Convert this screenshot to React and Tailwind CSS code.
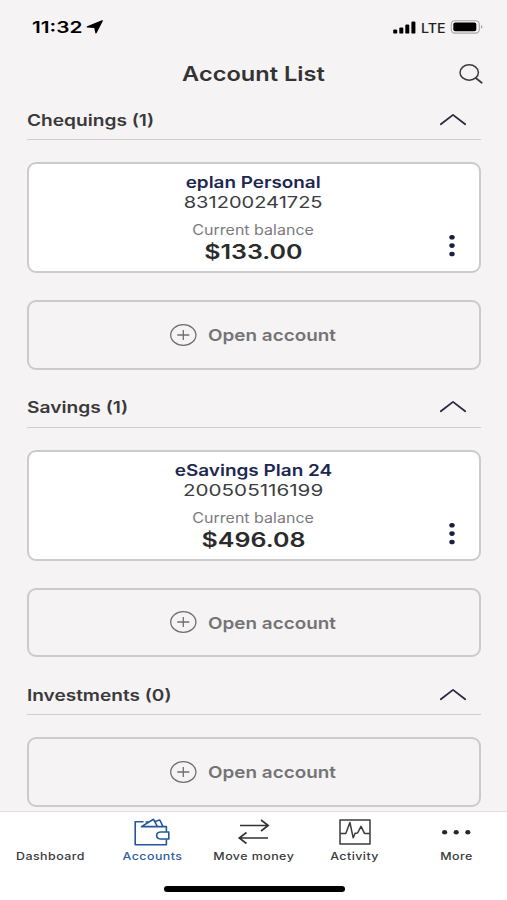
import clsx from "clsx";

const sections = [
  {
    title: "Chequings (1)",
    titleScale: "scale-x-[1.195]",
    accounts: [
      {
        name: "eplan Personal",
        nameScale: "scale-x-[1.18]",
        number: "831200241725",
        numberScale: "scale-x-[1.215]",
        balance: "$133.00",
      },
    ],
  },
  {
    title: "Savings (1)",
    titleScale: "scale-x-[1.2]",
    accounts: [
      {
        name: "eSavings Plan 24",
        nameScale: "scale-x-[1.185]",
        number: "200505116199",
        numberScale: "scale-x-[1.25]",
        balance: "$496.08",
      },
    ],
  },
  { title: "Investments (0)", titleScale: "scale-x-[1.19]", accounts: [] },
];

// Wide lettering: Inter stretched along the x axis
const Wide = ({ className, children }) => (
  <span className={clsx("inline-block whitespace-nowrap", className)}>
    {children}
  </span>
);

const StatusBar = () => (
  <div className="flex h-[54px] shrink-0 items-center justify-between pl-8 pr-[23px] text-black">
    <div className="flex items-center">
      <div className="w-[54px]">
        <Wide className="origin-left scale-x-[1.3] text-[16px] font-semibold">
          11:32
        </Wide>
      </div>
      <svg className="h-[14px] w-[18px]" viewBox="0 0 18 14">
        <path d="M16.2 0.8 L10 12.8 L8.8 7.4 L1.4 6.9 Z" fill="#000" stroke="#000" strokeWidth="1.4" strokeLinejoin="round" />
      </svg>
    </div>
    <div className="flex items-center">
      <svg className="h-[13px] w-6" viewBox="0 0 24 13">
        <rect x="0.2" y="8.4" width="4" height="4.2" rx="1.2" />
        <rect x="6.3" y="6.4" width="4" height="6.2" rx="1.2" />
        <rect x="12.3" y="3.6" width="4" height="9" rx="1.2" />
        <rect x="18.4" y="0.5" width="4" height="12.1" rx="1.2" />
      </svg>
      <div className="ml-1 w-[29px]">
        <Wide className="origin-left scale-x-[1.06] text-[13.5px] font-medium text-[#222]">
          LTE
        </Wide>
      </div>
      <svg className="h-[14px] w-[34px]" viewBox="0 0 34 14">
        <rect x="1.3" y="0.7" width="28" height="12.4" rx="3.6" fill="none" stroke="#a9a8a9" strokeWidth="1.1" />
        <rect x="3.3" y="2.5" width="23" height="8.8" rx="2" />
        <path d="M31.2 5 Q33.6 6.9 31.2 8.8 Z" fill="#8f8e8f" />
      </svg>
    </div>
  </div>
);

const Header = () => (
  <header className="relative flex h-[39px] shrink-0 items-center justify-center">
    <h1 className="text-[20px] font-semibold leading-none text-[#333]">
      <Wide className="scale-x-[1.18]">Account List</Wide>
    </h1>
    <button className="absolute right-[23px] top-[9px]" aria-label="Search">
      <svg className="h-[22px] w-[26px]" viewBox="0 0 26 22" fill="none" stroke="#3c3c3e" strokeWidth="1.5">
        <ellipse cx="11.2" cy="9.5" rx="9.2" ry="7.7" />
        <path d="M17.8 15 L23.7 19.7" strokeLinecap="round" strokeWidth="1.8" />
      </svg>
    </button>
  </header>
);

const AccountCard = ({ account }) => (
  <div className="mb-[27px] flex h-[111px] rounded-[9px] border-2 border-[#cccbcc] bg-white">
    <div className="w-12" />
    <div className="flex flex-1 flex-col items-center pt-2">
      <div className="h-5 text-[16px] font-semibold leading-5 text-[#1d2850]">
        <Wide className={account.nameScale}>{account.name}</Wide>
      </div>
      <div className="h-[23px] text-[16.5px] leading-[21px] text-[#3d3d3f]">
        <Wide className={account.numberScale}>{account.number}</Wide>
      </div>
      <div className="mt-[5px] h-5 text-[14px] leading-5 text-[#7b7b7d]">
        <Wide className="scale-x-[1.145]">Current balance</Wide>
      </div>
      <div className="h-6 text-[20px] font-semibold leading-6 text-[#2b2b2d]">
        <Wide className="scale-x-[1.25]">{account.balance}</Wide>
      </div>
    </div>
    <button className="mt-[70px] flex h-[23px] w-12 pl-[18px]" aria-label="Options">
      <svg className="h-[23px] w-[7px]" viewBox="0 0 7 23" fill="#17203f">
        <ellipse cx="3" cy="3.2" rx="2.7" ry="2.3" />
        <ellipse cx="3" cy="11.6" rx="2.7" ry="2.3" />
        <ellipse cx="3" cy="20" rx="2.7" ry="2.3" />
      </svg>
    </button>
  </div>
);

const OpenAccount = () => (
  <button className="flex h-[69.5px] w-full items-center rounded-[9px] border-2 border-[#cccbcc] pl-[140px]">
    <svg className="h-6 w-7" viewBox="0 0 28 24" fill="none" stroke="#6f6f71" strokeWidth="1.3">
      <ellipse cx="14.3" cy="12" rx="12.6" ry="10.4" />
      <path d="M8.3 12 H20.3 M14.3 6.9 V17.1" />
    </svg>
    <Wide className="ml-[11px] mt-px origin-left scale-x-[1.145] text-[16.5px] font-semibold text-[#747476]">
      Open account
    </Wide>
  </button>
);

const Section = ({ section }) => (
  <section className="mb-[18.2px]">
    <div className="mb-[22px] flex h-10 items-center justify-between border-b-[1.5px] border-[#d0cfd0] pr-[14px]">
      <h2 className="text-[16px] font-semibold text-[#3a393b]">
        <Wide className={clsx("origin-left", section.titleScale)}>
          {section.title}
        </Wide>
      </h2>
      <svg className="h-[14px] w-7" viewBox="0 0 28 14" fill="none" stroke="#252a3d" strokeWidth="1.8">
        <path d="M1.8 11.2 L14 1.9 L26.2 11.2" strokeLinecap="round" strokeLinejoin="round" />
      </svg>
    </div>
    {section.accounts.map((account) => (
      <AccountCard key={account.number} account={account} />
    ))}
    <OpenAccount />
  </section>
);

const WalletIcon = () => (
  <svg className="h-[30px] w-9" viewBox="0 0 36 30" fill="none" stroke="#25569b" strokeWidth="1.6" strokeLinejoin="round">
    <path d="M9.5 4.8 H1.2 V27.8 H32.4 V22.2 M32.4 14.8 V9.6 H7.5 L19.5 2.3 L23.2 9.2" />
    <path d="M20.7 4.6 L25.8 3 L28.9 9.3 M11.5 5 H14.5" />
    <path d="M26.4 15 H34.8 V22 H26.4 Q22.6 21.6 22.6 18.5 Q22.6 15.4 26.4 15 Z" />
  </svg>
);

const MoveIcon = () => (
  <svg className="h-[30px] w-9" viewBox="0 0 36 30" fill="none" stroke="#333335" strokeWidth="1.6">
    <path d="M5 8.5 H33 M26 3 L33.3 8.5 L26 14" />
    <path d="M33 21 H4.5 M11.5 15.5 L4.2 21 L11.5 26.5" />
  </svg>
);

const ActivityIcon = () => (
  <svg className="h-[30px] w-9" viewBox="0 0 36 30" fill="none" stroke="#3b3b3d" strokeWidth="1.5" strokeLinejoin="round">
    <rect x="3" y="3" width="30" height="24" />
    <path d="M3 16.4 H8.8 L12.9 5.5 L16.2 20.8 L18.1 16.3 L20.6 16 L24 9.3 L27.5 16.4 H33" />
  </svg>
);

const MoreIcon = () => (
  <svg className="h-[30px] w-9" viewBox="0 0 36 30" fill="#28282a">
    <ellipse cx="6.6" cy="15.2" rx="2.6" ry="2.2" />
    <ellipse cx="18.2" cy="15.2" rx="2.6" ry="2.2" />
    <ellipse cx="29.8" cy="15.2" rx="2.6" ry="2.2" />
  </svg>
);

const tabs = [
  { label: "Dashboard" },
  { label: "Accounts", icon: WalletIcon, active: true },
  { label: "Move money", icon: MoveIcon },
  { label: "Activity", icon: ActivityIcon },
  { label: "More", icon: MoreIcon },
];

const TabBar = () => (
  <nav className="flex h-[89px] shrink-0 flex-col items-center border-t border-[#dedddf] bg-white">
    <div className="grid w-full grid-cols-5 pt-[5px]">
      {tabs.map(({ label, icon: Icon, active }) => (
        <div key={label} className="flex flex-col items-center">
          <div className="h-[30px]">{Icon && <Icon />}</div>
          <div
            className={clsx(
              "h-[18px] text-[11px] font-medium leading-[19px] tracking-[0.4px]",
              active ? "text-[#2f5e9e]" : "text-[#39393b]"
            )}
          >
            <Wide className="scale-x-[1.13]">{label}</Wide>
          </div>
        </div>
      ))}
    </div>
    <div className="ml-px mt-[21px] h-[6px] w-[181px] rounded-full bg-black" />
  </nav>
);

export default function App() {
  return (
    <div className="flex h-[900px] w-[507px] flex-col overflow-hidden bg-[#f5f3f4] font-['Inter',sans-serif]">
      <StatusBar />
      <Header />
      <main className="min-h-0 flex-1 overflow-hidden px-[26.5px] pt-[7px]">
        {sections.map((section) => (
          <Section key={section.title} section={section} />
        ))}
      </main>
      <TabBar />
    </div>
  );
}
